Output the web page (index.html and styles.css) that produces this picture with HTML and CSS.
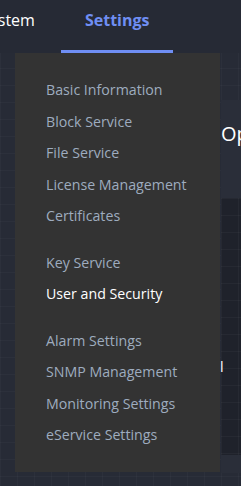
FILE: index.html
```html
<!DOCTYPE html>
<html lang="en">

<head>
    <meta charset="UTF-8">
    <meta name="viewport" content="width=device-width, initial-scale=1.0">
    <title>Settings</title>
    <link rel="stylesheet" href="styles.css">
</head>

<body>

    <header class="topbar">
        <nav class="tabs">
            <a class="tab">System</a>
            <a class="tab active">Settings</a>
        </nav>
    </header>

    <main class="content">
        <aside class="side"></aside>
        <div class="workspace">
            <section class="overview">
                <h2 class="overview-title">Operation Overview</h2>
            </section>
            <section class="board">
                <div class="board-row">
                    <span class="metric">Total</span>
                </div>
            </section>
            <div class="strip"></div>
        </div>
    </main>

    <!-- Settings dropdown -->
    <div class="dropdown">
        <ul class="menu-group">
            <li>Basic Information</li>
            <li>Block Service</li>
            <li>File Service</li>
            <li>License Management</li>
            <li>Certificates</li>
        </ul>
        <ul class="menu-group">
            <li>Key Service</li>
            <li class="current">User and Security</li>
        </ul>
        <ul class="menu-group">
            <li>Alarm Settings</li>
            <li>SNMP Management</li>
            <li>Monitoring Settings</li>
            <li>eService Settings</li>
        </ul>
    </div>

</body>

</html>
```

FILE: styles.css
```css
body {
    font-family: 'Open Sans', sans-serif;
    background-color: #272b36;
    background-image:
        linear-gradient(rgba(255, 255, 255, 0.025) 1px, transparent 1px),
        linear-gradient(90deg, rgba(255, 255, 255, 0.025) 1px, transparent 1px);
    background-size: 17px 17px;
    color: #ffffff;
    margin: 0;
    width: 241px;
    height: 486px;
    overflow: hidden;
    position: relative;
}

.topbar {
    height: 53px;
    background-color: #262a35;
}

.tabs {
    display: flex;
    height: 100%;
    margin-left: -43px;
    gap: 2px;
}

.tab {
    display: flex;
    align-items: center;
    padding: 0 24px 10px;
    font-size: 16px;
    color: #ffffff;
    white-space: nowrap;
    border-bottom: 3px solid transparent;
    box-sizing: border-box;
    cursor: pointer;
}

.tab.active {
    color: #6f8ef3;
    font-weight: 700;
    border-bottom-color: #6f8ef3;
}

.content {
    display: grid;
    grid-template-columns: 221px 1fr;
    height: 433px;
}

.workspace {
    display: flex;
    flex-direction: column;
    min-width: 0;
}

.overview {
    margin-top: 47px;
    height: 98px;
    background-color: #2a2e39;
}

.overview-title {
    margin: 0;
    padding-top: 20px;
    font-size: 20px;
    font-weight: 400;
    white-space: nowrap;
    line-height: 28px;
}

.board {
    height: 257px;
    background-color: #1f222b;
    background-image:
        linear-gradient(rgba(255, 255, 255, 0.03) 1px, transparent 1px),
        linear-gradient(90deg, rgba(255, 255, 255, 0.03) 1px, transparent 1px);
    background-size: 17px 17px;
}

.board-row {
    padding-top: 157px;
    margin-left: -30px;
}

.metric {
    font-size: 14px;
    white-space: nowrap;
}

.strip {
    height: 18px;
    background-color: #2a2e39;
}

.dropdown {
    position: absolute;
    left: 15px;
    top: 53px;
    width: 205px;
    height: 419px;
    box-sizing: border-box;
    padding: 21px 0 0 31px;
    background-color: #333333;
}

.menu-group {
    list-style: none;
    margin: 0 0 15px;
    padding: 0;
}

.menu-group li {
    font-size: 14.2px;
    line-height: 31.5px;
    color: #9eacbf;
    white-space: nowrap;
    cursor: pointer;
}

.menu-group li.current {
    color: #ffffff;
}
```
